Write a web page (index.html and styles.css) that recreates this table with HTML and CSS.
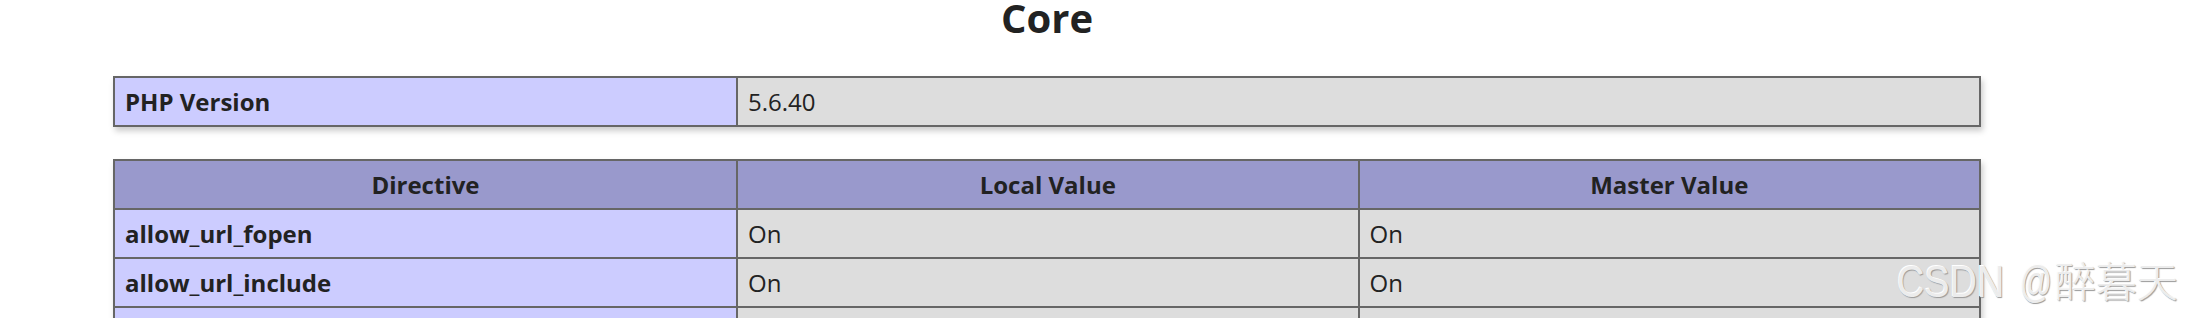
FILE: index.html
```html
<!DOCTYPE html>
<html lang="en">
<head>
<meta charset="utf-8">
<title>phpinfo() - Core</title>
<link rel="stylesheet" href="styles.css">
</head>
<body>
<div class="page">
  <div class="center">
    <h2 class="section-title">Core</h2>
    <table class="info info-single">
      <colgroup><col class="col-e"><col></colgroup>
      <tr><td class="e">PHP Version</td><td class="v">5.6.40</td></tr>
    </table>
    <table class="info info-multi">
      <colgroup><col class="col-e"><col class="col-v"><col class="col-v"></colgroup>
      <tr class="h"><th>Directive</th><th>Local Value</th><th>Master Value</th></tr>
      <tr><td class="e">allow_url_fopen</td><td class="v">On</td><td class="v">On</td></tr>
      <tr><td class="e">allow_url_include</td><td class="v">On</td><td class="v">On</td></tr>
      <tr><td class="e">always_populate_raw_post_data</td><td class="v">0</td><td class="v">0</td></tr>
    </table>
  </div>
  <div class="watermark"><span class="wm-latin">CSDN</span><span class="wm-at">@</span><span class="wm-cjk">醉暮天</span></div>
</div>
</body>
</html>
```
FILE: styles.css
```css
html, body {
  margin: 0;
  padding: 0;
  background: #fff;
  overflow: hidden;
}
body {
  color: #222;
  font-family: "Open Sans", "Noto Sans", "Liberation Sans", sans-serif;
}
.page {
  position: relative;
  width: 2185px;
  height: 318px;
}
.center {
  width: 1868px;
  margin-left: 113px;
}
.section-title {
  margin: 0 0 40px;
  font-size: 40px;
  line-height: 36px;
  font-weight: 700;
  text-align: center;
}
.info {
  width: 1868px;
  border-collapse: collapse;
  table-layout: fixed;
  box-shadow: 2px 4px 6px #ccc;
}
.info-multi {
  margin-top: 32px;
}
.col-e {
  width: 623px;
}
.info td, .info th {
  border: 2px solid #666;
  padding: 8px 10px;
  font-size: 24px;
  line-height: 31px;
  vertical-align: baseline;
  text-align: left;
  white-space: nowrap;
  overflow: hidden;
}
.info th {
  text-align: center;
}
.h th {
  background: #99c;
  font-weight: 700;
}
.e {
  background: #ccf;
  font-weight: 700;
}
.v {
  background: #ddd;
}
.watermark {
  position: absolute;
  left: 1897px;
  top: 257px;
  white-space: nowrap;
  font-family: "Liberation Sans", "Noto Sans CJK SC", sans-serif;
  font-size: 44px;
  line-height: 44px;
  color: #ececec;
  text-shadow: -1px -1px 0 #fff, 1px 1px 1px #9a9a9a, 0 0 1px #b0b0b0;
}
.wm-latin {
  display: inline-block;
  width: 123px;
  transform: scaleX(0.86);
  transform-origin: 0 0;
}
.wm-at {
  display: inline-block;
  width: 35px;
  transform: scaleX(0.72);
  transform-origin: 0 0;
}
.wm-cjk {
  font-family: "Noto Sans CJK SC", sans-serif;
  font-size: 41px;
  font-weight: 300;
}
```
